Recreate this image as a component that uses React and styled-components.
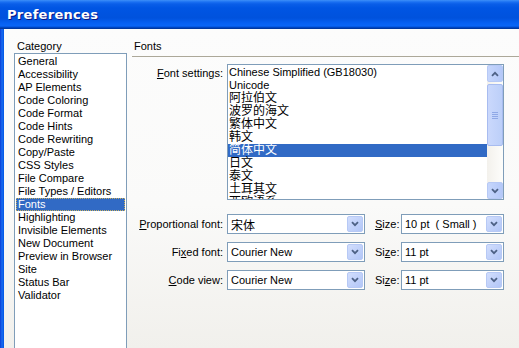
import React from "react";
import styled, { createGlobalStyle } from "styled-components";

const GlobalStyle = createGlobalStyle`
    body {
        margin: 0;
        background: #ffffff;
        font-family: "Liberation Sans", "Noto Sans CJK SC", sans-serif;
    }
`;

const categories = [
    "General", "Accessibility", "AP Elements", "Code Coloring", "Code Format",
    "Code Hints", "Code Rewriting", "Copy/Paste", "CSS Styles", "File Compare",
    "File Types / Editors", "Fonts", "Highlighting", "Invisible Elements",
    "New Document", "Preview in Browser", "Site", "Status Bar", "Validator",
];

const encodings = [
    { name: "Chinese Simplified (GB18030)" },
    { name: "Unicode" },
    { name: "阿拉伯文", cjk: true },
    { name: "波罗的海文", cjk: true },
    { name: "繁体中文", cjk: true },
    { name: "韩文", cjk: true },
    { name: "简体中文", cjk: true },
    { name: "日文", cjk: true },
    { name: "泰文", cjk: true },
    { name: "土耳其文", cjk: true },
    { name: "西欧语系", cjk: true },
];

const fontRows = [
    { label: "Proportional font:", key: "P", pre: "", post: "roportional font:", font: "宋体", cjk: true, size: "10 pt  ( Small )" },
    { label: "Fixed font:", pre: "Fi", key: "x", post: "ed font:", font: "Courier New", size: "11 pt" },
    { label: "Code view:", pre: "", key: "C", post: "ode view:", font: "Courier New", size: "11 pt" },
];

function Chevron() {
    return (
        <svg width="8" height="6" viewBox="0 0 8 6">
            <path d="M1 1.2 L4 4.2 L7 1.2" fill="none" stroke="#4d6185" strokeWidth="1.8" />
        </svg>
    );
}

function Arrow({ up }) {
    return (
        <svg width="8" height="6" viewBox="0 0 8 6">
            <path d={up ? "M1 4.8 L4 1.8 L7 4.8" : "M1 1.2 L4 4.2 L7 1.2"} fill="none" stroke="#4d6185" strokeWidth="1.8" />
        </svg>
    );
}

function Combo({ width, cjk, children }) {
    return (
        <ComboBox width={width}>
            <ComboText cjk={cjk}>{children}</ComboText>
            <ComboButton><Chevron /></ComboButton>
        </ComboBox>
    );
}

export default function App() {
    return (
        <>
            <GlobalStyle />
            <Window>
                <TitleBar>Preferences</TitleBar>
                <Body>
                    <Sidebar>
                        <Heading>Category</Heading>
                        <CategoryList>
                            {categories.map((c) => (
                                <CategoryItem key={c} selected={c === "Fonts"}>{c}</CategoryItem>
                            ))}
                        </CategoryList>
                    </Sidebar>
                    <Panel>
                        <PanelHeading>Fonts</PanelHeading>
                        <Form>
                            <Label><u>F</u>ont settings:</Label>
                            <ListBox>
                                <ListItems>
                                    {encodings.map((e) => (
                                        <ListItem key={e.name} cjk={e.cjk} selected={e.name === "简体中文"}>{e.name}</ListItem>
                                    ))}
                                </ListItems>
                                <ScrollBar>
                                    <ScrollButton><Arrow up /></ScrollButton>
                                    <Thumb>
                                        <Grip />
                                    </Thumb>
                                    <Track />
                                    <ScrollButton><Arrow /></ScrollButton>
                                </ScrollBar>
                            </ListBox>

                            {fontRows.map((r, i) => (
                                <React.Fragment key={r.label}>
                                    <Label first={i === 0}>{r.pre}<u>{r.key}</u>{r.post}</Label>
                                    <ControlRow first={i === 0}>
                                        <Combo width={138} cjk={r.cjk}>{r.font}</Combo>
                                        <SizeLabel>{i === 0 ? <><u>S</u>ize:</> : <>Si<u>z</u>e:</>}</SizeLabel>
                                        <Combo width={103}>{r.size}</Combo>
                                    </ControlRow>
                                </React.Fragment>
                            ))}
                        </Form>
                    </Panel>
                </Body>
            </Window>
        </>
    );
}

const Window = styled.div`
    width: 519px;
    height: 348px;
    overflow: hidden;
    display: flex;
    flex-direction: column;
    background: linear-gradient(to right, #0a3cd6 0px, #1a6cf0 2px, #0055e5 4px);
    font-size: 11px;
    color: #000000;
`;

const TitleBar = styled.div`
    height: 29px;
    flex-shrink: 0;
    display: flex;
    align-items: center;
    padding-left: 7px;
    padding-bottom: 1px;
    box-sizing: border-box;
    background: linear-gradient(to bottom, #3d8ff8 0px, #1a70f2 2px, #0a5ee8 4px, #0055e3 8px, #0052dd 18px, #0660f2 23px, #0a66f6 26px, #004fd8 27px, #003ca8 28px, #003399 29px);
    color: #ffffff;
    font-family: "DejaVu Sans", sans-serif;
    font-weight: bold;
    font-size: 13px;
    letter-spacing: 0.3px;
    text-shadow: 1px 1px 0 #0a1883;
`;

const Body = styled.div`
    flex: 1;
    margin-left: 4px;
    display: flex;
    gap: 5px;
    padding: 11px 0 0 10px;
    background: linear-gradient(to bottom, #fcfcfc 0%, #fafaf9 55%, #f1f0ec 100%);
    min-height: 0;
`;

const Sidebar = styled.div`
    width: 113px;
    display: flex;
    flex-direction: column;
`;

const Heading = styled.div`
    height: 17px;
    line-height: 13px;
    padding-left: 3px;
`;

const CategoryList = styled.div`
    height: 310px;
    border: 1px solid #7f9db9;
    background: #ffffff;
    padding-top: 1px;
    flex-shrink: 0;
`;

const CategoryItem = styled.div`
    height: 13px;
    line-height: 13px;
    margin: 0 1px;
    padding-left: 2px;
    white-space: nowrap;
    ${(p) => p.selected && `
        background: #316ac5;
        color: #ffffff;
        outline: 1px dotted #c8b060;
        outline-offset: -1px;
    `}
`;

const Panel = styled.div`
    flex: 1;
    display: flex;
    flex-direction: column;
`;

const PanelHeading = styled.div`
    height: 16px;
    line-height: 13px;
    padding-left: 2px;
    border-bottom: 1px solid #aca899;
`;

const Form = styled.div`
    display: grid;
    grid-template-columns: 91px 277px;
    column-gap: 4px;
    row-gap: 8px;
    padding-top: 7px;
    align-items: center;
`;

const Label = styled.div`
    text-align: right;
    align-self: ${(p) => (p.first === undefined ? "start" : "center")};
    padding-top: ${(p) => (p.first === undefined ? "3px" : "0")};
    margin-top: ${(p) => (p.first ? "6px" : "0")};
    white-space: nowrap;
    line-height: 13px;
`;

const ListBox = styled.div`
    height: 136px;
    box-sizing: border-box;
    border: 1px solid #7f9db9;
    background: #ffffff;
    display: flex;
`;

const ListItems = styled.div`
    flex: 1;
    overflow: hidden;
    padding-top: 1px;
`;

const ListItem = styled.div`
    height: 13px;
    line-height: 13px;
    padding-left: 1px;
    white-space: nowrap;
    font-size: ${(p) => (p.cjk ? "12px" : "11px")};
    ${(p) => p.selected && "background: #316ac5; color: #ffffff;"}
`;

const ScrollBar = styled.div`
    width: 16px;
    display: flex;
    flex-direction: column;
    background: linear-gradient(to right, #f3f1ec, #fdfdfb);
`;

const ScrollButton = styled.div`
    height: 17px;
    box-sizing: border-box;
    border: 1px solid #b7c9f5;
    border-radius: 2px;
    background: linear-gradient(to right, #c6d6fc, #b4c8f8);
    display: flex;
    align-items: center;
    justify-content: center;
`;

const Thumb = styled.div`
    height: 62px;
    margin-top: 2px;
    box-sizing: border-box;
    border: 1px solid #a8bcf0;
    border-radius: 2px;
    background: linear-gradient(to right, #cad8fc, #bccff9);
    display: flex;
    align-items: center;
    justify-content: center;
`;

const Grip = styled.div`
    width: 6px;
    height: 7px;
    background: repeating-linear-gradient(to bottom, #8fa8e6 0px, #8fa8e6 1px, transparent 1px, transparent 2px);
`;

const Track = styled.div`
    flex: 1;
`;

const ControlRow = styled.div`
    display: flex;
    align-items: center;
    margin-top: ${(p) => (p.first ? "6px" : "0")};
`;

const SizeLabel = styled.div`
    margin-left: 10px;
    width: 26px;
    white-space: nowrap;
`;

const ComboBox = styled.div`
    width: ${(p) => p.width}px;
    height: 20px;
    box-sizing: border-box;
    border: 1px solid #7f9db9;
    background: #ffffff;
    display: flex;
    align-items: center;
    padding: 1px;
`;

const ComboText = styled.div`
    flex: 1;
    padding-left: 2px;
    font-size: ${(p) => (p.cjk ? "12px" : "11px")};
    white-space: pre;
`;

const ComboButton = styled.div`
    width: 16px;
    height: 16px;
    box-sizing: border-box;
    border: 1px solid #b7c9f5;
    border-radius: 2px;
    background: linear-gradient(to bottom right, #d2defd, #b2c6f7);
    display: flex;
    align-items: center;
    justify-content: center;
`;
